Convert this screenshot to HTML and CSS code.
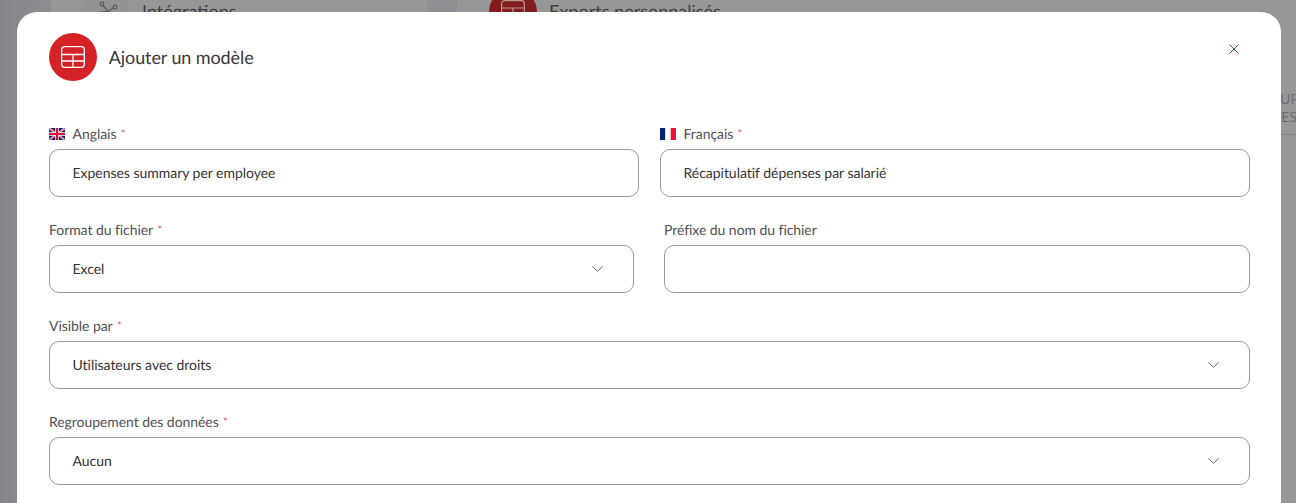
FILE: index.html
```html
<!DOCTYPE html>
<html lang="fr">
<head>
<meta charset="utf-8">
<title>Ajouter un modèle</title>
<link rel="stylesheet" href="styles.css">
</head>
<body>
<div class="backdrop">
  <div class="bd-side"></div>
  <div class="bd-panel">
    <div class="bd-circle bd-grey">
      <svg class="bd-icon" viewBox="0 0 24 24" fill="none" stroke="#5a5a5a" stroke-width="1.2"><circle cx="8" cy="4" r="1.8"/><circle cx="21" cy="7" r="1.8"/><path d="M9 5.6l5 5.6 5.4-3.4M14 11.2l-13 2"/></svg>
    </div>
    <div class="bd-title">Intégrations</div>
  </div>
  <div class="bd-gap"></div>
  <div class="bd-panel bd-panel-wide">
    <div class="bd-circle bd-red">
      <svg class="bd-icon2" viewBox="0 0 24 24" fill="none" stroke="#b59a9a" stroke-width="1.2"><rect x="0.65" y="0.65" width="22.7" height="22.7" rx="3"/><path d="M0.65 8h22.7M0.65 15h22.7M12 8v15"/></svg>
    </div>
    <div class="bd-title">Exports personnalisés</div>
  </div>
  <div class="bd-edge">
    <div class="bd-edge-a">GROUPE</div>
    <div>DONNÉES</div>
  </div>
</div>

<main class="modal">
  <header class="modal-head">
    <div class="avatar">
      <svg class="avatar-icon" viewBox="0 0 24 22" fill="none" stroke="#fff" stroke-width="1.3">
        <rect x="0.65" y="0.65" width="22.7" height="20.7" rx="3"/>
        <path d="M0.65 8.5h22.7M0.65 15h22.7M12 8.5v12.8"/>
      </svg>
    </div>
    <h1 class="modal-title">Ajouter un modèle</h1>
    <button class="close" aria-label="Fermer">
      <svg viewBox="0 0 10 10" fill="none" stroke="#1f5a7c" stroke-width="1"><path d="M0.5 0.5l9 9M9.5 0.5l-9 9"/></svg>
    </button>
  </header>

  <form class="form">
    <div class="row row-lang">
      <div class="field">
        <label class="label">
          <svg class="flag" viewBox="0 0 16 12"><rect width="16" height="12" fill="#14206b"/><path d="M0 0l16 12M16 0L0 12" stroke="#fff" stroke-width="1.8"/><path d="M0 0l16 12M16 0L0 12" stroke="#e0103a" stroke-width="0.8"/><path d="M8 0v12M0 6h16" stroke="#fff" stroke-width="3.4"/><path d="M8 0v12M0 6h16" stroke="#e0103a" stroke-width="2"/></svg>
          <span>Anglais</span><span class="req">*</span>
        </label>
        <div class="control">Expenses summary per employee</div>
      </div>
      <div class="field">
        <label class="label">
          <svg class="flag" viewBox="0 0 16 12"><rect width="5.4" height="12" fill="#0a2472"/><rect x="5.4" width="5.3" height="12" fill="#fff"/><rect x="10.7" width="5.3" height="12" fill="#ef1238"/></svg>
          <span>Français</span><span class="req">*</span>
        </label>
        <div class="control">Récapitulatif dépenses par salarié</div>
      </div>
    </div>

    <div class="row row-file">
      <div class="field">
        <label class="label"><span>Format du fichier</span><span class="req">*</span></label>
        <div class="control select">Excel
          <svg class="chev" viewBox="0 0 11 6" fill="none" stroke="#566069" stroke-width="0.9"><path d="M0.4 0.4L5.5 5.4l5.1-5"/></svg>
        </div>
      </div>
      <div class="field">
        <label class="label"><span>Préfixe du nom du fichier</span></label>
        <div class="control"></div>
      </div>
    </div>

    <div class="field">
      <label class="label"><span>Visible par</span><span class="req">*</span></label>
      <div class="control select">Utilisateurs avec droits
        <svg class="chev" viewBox="0 0 11 6" fill="none" stroke="#566069" stroke-width="0.9"><path d="M0.4 0.4L5.5 5.4l5.1-5"/></svg>
      </div>
    </div>

    <div class="field">
      <label class="label"><span>Regroupement des données</span><span class="req">*</span></label>
      <div class="control select">Aucun
        <svg class="chev" viewBox="0 0 11 6" fill="none" stroke="#566069" stroke-width="0.9"><path d="M0.4 0.4L5.5 5.4l5.1-5"/></svg>
      </div>
    </div>
  </form>
</main>
</body>
</html>
```
FILE: styles.css
```css
* { box-sizing: border-box; }
html, body { height: 100%; }
body {
  margin: 0;
  height: 503px;
  overflow: hidden;
  background: #979797;
  font-family: Lato, "Liberation Sans", sans-serif;
  color: #2b2b2e;
  position: relative;
  text-rendering: geometricPrecision;
}
.backdrop {
  position: absolute;
  inset: 0;
  display: flex;
  overflow: hidden;
  background: #979797;
}
.bd-side { width: 51px; background: linear-gradient(90deg, #85868b, #8c8d91); flex: none; }
.bd-panel { width: 376px; flex: none; display: flex; padding-left: 31px; position: relative; }
.bd-panel-wide { width: auto; flex: 1; padding-left: 32px; }
.bd-gap { width: 30px; flex: none; background: #8e8f95; }
.bd-circle { width: 48px; height: 48px; border-radius: 50%; margin-top: -12px; flex: none; display: flex; align-items: center; justify-content: center; }
.bd-grey { background: #929292; }
.bd-red { background: #851c1c; }
.bd-icon { width: 24px; height: 24px; }
.bd-icon2 { width: 24px; height: 24px; }
.bd-title { font-size: 18px; line-height: 22px; margin: 0 0 0 12px; color: #3f3f40; white-space: nowrap; }
.bd-edge { position: absolute; left: 1230px; top: 90px; width: 66px; height: 45px; overflow: hidden; font-size: 14px; line-height: 18px; color: #6c6c6e; border-bottom: 1px solid #858585; white-space: nowrap; }
.bd-edge-a { padding-left: 20px; }

.modal {
  position: absolute;
  left: 17px;
  top: 12px;
  width: 1264px;
  height: 491px;
  background: #fff;
  border-radius: 20px 20px 0 0;
  padding: 21px 31px 0 32px;
}
.modal-head { display: flex; align-items: center; height: 48px; position: relative; }
.avatar { width: 48px; height: 48px; border-radius: 50%; background: #d42226; display: flex; align-items: center; justify-content: center; flex: none; }
.avatar-icon { width: 24px; height: 22px; }
.modal-title { margin: 0 0 0 12px; font-size: 18px; font-weight: 400; line-height: 24px; color: #38383c; letter-spacing: -0.1px; margin-left: 11.8px; }
.close { position: absolute; right: 11px; top: 11px; width: 10px; height: 10px; padding: 0; border: 0; background: none; display: flex; }
.close svg { width: 10px; height: 10px; }

.form { display: flex; flex-direction: column; gap: 24px; margin-top: 44px; }
.row { display: flex; }
.row-lang { gap: 21px; }
.row-file { gap: 30px; }
.field { flex: 1 1 0; min-width: 0; }
.row-file .field:first-child { flex: 585 1 0; }
.row-file .field:last-child { flex: 586 1 0; }
.label { display: flex; align-items: center; height: 18px; font-size: 14px; line-height: 18px; color: #505055; margin-bottom: 6px; letter-spacing: -0.06px; }
.flag { width: 16px; height: 12px; margin-right: 7.6px; flex: none; }
.req { color: #f0587a; margin-left: 4px; font-size: 12px; position: relative; top: 0; }
.control {
  height: 48px;
  border: 1px solid #9c9c9c;
  border-radius: 10px;
  padding: 0 23px 2px 22.5px;
  display: flex;
  align-items: center;
  justify-content: space-between;
  font-size: 14px;
  color: #333336;
  background: #fff;
  letter-spacing: -0.03px;
}
.chev { width: 11px; height: 6px; margin-right: 7px; margin-top: 2px; flex: none; }
```
